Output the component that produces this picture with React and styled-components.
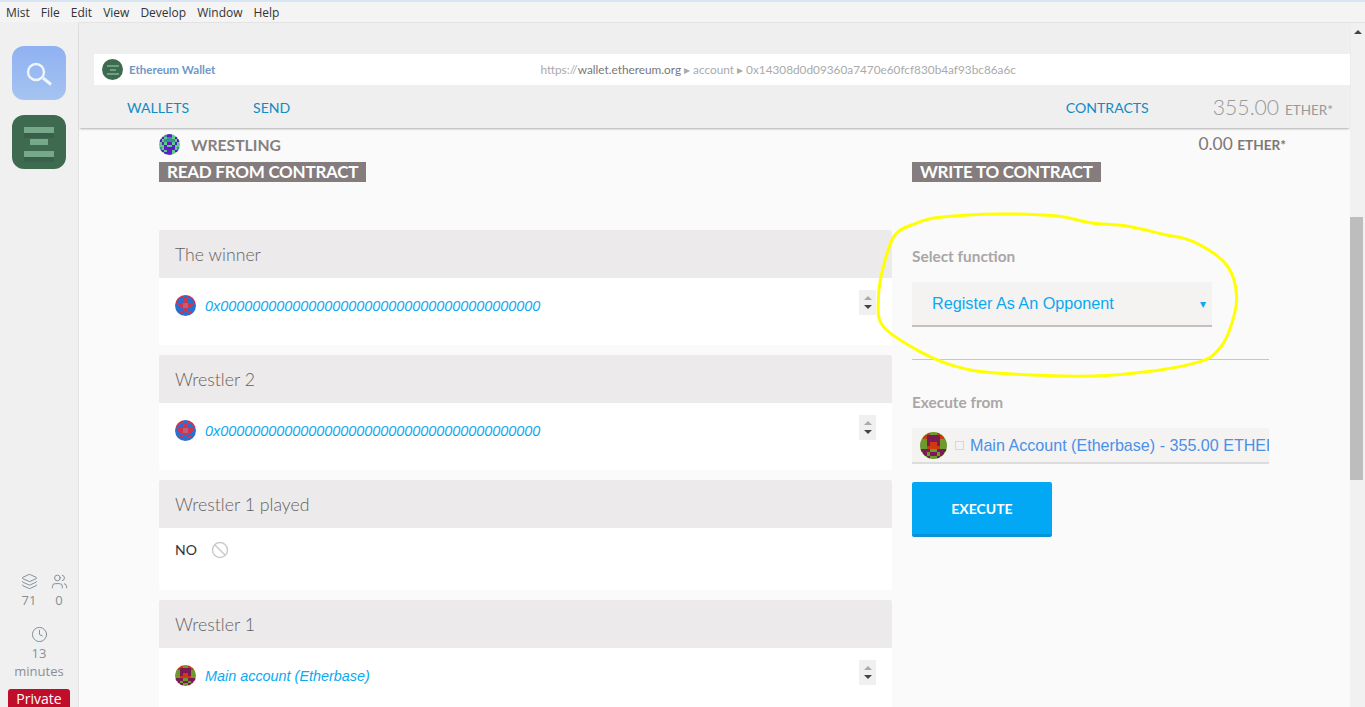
import React from 'react'
import styled, { createGlobalStyle } from 'styled-components'
import { Layers, Users, Clock, Ban } from 'lucide-react'

const MENU = ['Mist', 'File', 'Edit', 'View', 'Develop', 'Window', 'Help']
const ZEROS = '0x0000000000000000000000000000000000000000'

const WRESTLING = {
  colors: { g: '#63c98a', p: '#5a1fc0', t: '#3a8f9a' },
  rows: ['ggtppggg', 'gpgttgpg', 'pgttttgp', 'gpgppgpg', 'ggpggpgg', 'tgppppgt', 'ppgppgpp', 'ggpppggg'],
}
const BLUERED = {
  colors: { b: '#2a6fd0', r: '#d0344f', m: '#b8607e' },
  rows: ['brrbbrrb', 'rrbrrbrr', 'rbbrrbbr', 'brrmmrrb', 'bbrmmrbb', 'bbbrrbbb', 'bbrbbrbb', 'bbbbbbbb'],
}
const MAIN = {
  colors: { g: '#6c9a2c', m: '#7c1a55', r: '#cc3a12' },
  rows: ['ggrggrgg', 'grmmmmrg', 'ggmmmmgg', 'ggmrrmgg', 'ggrrrrgg', 'mmmggmmm', 'gmgmmgmg', 'ggmggmgg'],
}

const POINTS = [
  [228, 70], [300, 52], [480, 42], [650, 48], [750, 68], [860, 78], [970, 103], [1060, 125],
  [1160, 195], [1190, 295], [1165, 400], [1130, 455], [1080, 485], [945, 512], [760, 528],
  [480, 520], [350, 500], [240, 455], [130, 380], [115, 300], [130, 200], [165, 105],
]

// closed catmull-rom through the traced points of the pen stroke
const smoothLoop = (pts) => {
  const n = pts.length
  let d = `M${pts[0][0]} ${pts[0][1]}`
  pts.forEach((p, i) => {
    const prev = pts[(i - 1 + n) % n]
    const next = pts[(i + 1) % n]
    const after = pts[(i + 2) % n]
    const c1 = [p[0] + (next[0] - prev[0]) / 6, p[1] + (next[1] - prev[1]) / 6]
    const c2 = [next[0] - (after[0] - p[0]) / 6, next[1] - (after[1] - p[1]) / 6]
    d += ` C${c1[0]} ${c1[1]} ${c2[0]} ${c2[1]} ${next[0]} ${next[1]}`
  })
  return d + ' Z'
}

const Identicon = ({ data, size = 21 }) => (
  <IconDisc $size={size}>
    <svg width={size} height={size} viewBox="0 0 8 8" shapeRendering="crispEdges">
      {data.rows.map((row, y) =>
        row.split('').map((c, x) => <rect key={`${x}-${y}`} x={x} y={y} width="1" height="1" fill={data.colors[c]} />)
      )}
    </svg>
  </IconDisc>
)

const Stepper = () => (
  <StepBox>
    <StepUp />
    <StepDown />
  </StepBox>
)

const Section = ({ title, children }) => (
  <SectionBox>
    <SectionHead>{title}</SectionHead>
    {children}
  </SectionBox>
)

const AddressRow = ({ data, children }) => (
  <SectionBody $height={67}>
    <Identicon data={data} />
    <AddressText>{children}</AddressText>
    <Stepper />
  </SectionBody>
)

const App = () => {
  return (
    <Root>
      <GlobalStyle />
      <TopStrip />
      <MenuBar>
        {MENU.map((m) => <MenuItem key={m}>{m}</MenuItem>)}
      </MenuBar>
      <Shell>
        <Sidebar>
          <TabList>
            <TabIcon $bg="linear-gradient(#8fb1f1, #a5c4f1)">
              <svg width="54" height="54" viewBox="0 0 54 54" fill="none" stroke="#f0f4fc">
                <circle cx="24" cy="26" r="8" strokeWidth="2.4" />
                <path d="M31 32 L39 38.5" strokeWidth="3" />
              </svg>
            </TabIcon>
            <TabIcon $bg="#3e6b4f">
              <svg width="54" height="54" viewBox="0 0 54 54">
                <rect x="12" y="12" width="30" height="6" fill="#76a98a" />
                <rect x="12" y="18" width="30" height="5" fill="#38604a" />
                <rect x="18" y="24" width="18" height="6" fill="#76a98a" />
                <rect x="12" y="36" width="30" height="6" fill="#76a98a" />
                <rect x="12" y="42" width="30" height="5" fill="#38604a" />
              </svg>
            </TabIcon>
          </TabList>
          <StatusBlock>
            <StatPair>
              <Stat><Layers size={17} strokeWidth={1.2} color="#6f7f8a" />71</Stat>
              <Stat><Users size={17} strokeWidth={1.2} color="#6f7f8a" />0</Stat>
            </StatPair>
            <ClockStat>
              <Clock size={17} strokeWidth={1.2} color="#6f7f8a" />
              <span>13</span>
              <span>minutes</span>
            </ClockStat>
            <PrivateTag>Private</PrivateTag>
          </StatusBlock>
        </Sidebar>
        <Main>
          <Header>
            <UrlBar>
              <Brand>
                <BrandDisc>
                  <svg width="12" height="12" viewBox="0 0 12 12">
                    <rect x="0" y="1" width="12" height="2" fill="#6ea083" />
                    <rect x="3" y="5" width="6" height="2" fill="#6ea083" />
                    <rect x="0" y="9" width="12" height="2" fill="#6ea083" />
                  </svg>
                </BrandDisc>
                Ethereum Wallet
              </Brand>
              <UrlText>
                https://<b>wallet.ethereum.org</b> ▸ account ▸ 0x14308d0d09360a7470e60fcf830b4af93bc86a6c
              </UrlText>
            </UrlBar>
            <NavBar>
              <NavLink>WALLETS</NavLink>
              <NavLink>SEND</NavLink>
              <NavSpacer />
              <NavLink>CONTRACTS</NavLink>
              <Balance>355.00 <small>ETHER*</small></Balance>
            </NavBar>
          </Header>
          <Content>
            <TitleRow>
              <Identicon data={WRESTLING} />
              <Title>WRESTLING</Title>
              <TitleBalance>0.00 <b>ETHER*</b></TitleBalance>
            </TitleRow>
            <Columns>
              <ReadColumn>
                <Badge>READ FROM CONTRACT</Badge>
                <SectionList>
                  <Section title="The winner">
                    <AddressRow data={BLUERED}>{ZEROS}</AddressRow>
                  </Section>
                  <Section title="Wrestler 2">
                    <AddressRow data={BLUERED}>{ZEROS}</AddressRow>
                  </Section>
                  <Section title="Wrestler 1 played">
                    <SectionBody $height={62} $top={11}>
                      <NoRow>
                        <NoText>NO</NoText>
                        <Ban size={18} strokeWidth={2} color="#cbcbcb" />
                      </NoRow>
                    </SectionBody>
                  </Section>
                  <Section title="Wrestler 1">
                    <AddressRow data={MAIN}>Main account (Etherbase)</AddressRow>
                  </Section>
                </SectionList>
              </ReadColumn>
              <WriteColumn>
                <Badge>WRITE TO CONTRACT</Badge>
                <FieldLabel $top={64}>Select function</FieldLabel>
                <SelectBox>
                  Register As An Opponent
                  <SelectArrow>▾</SelectArrow>
                </SelectBox>
                <Rule />
                <FieldLabel $top={32}>Execute from</FieldLabel>
                <AccountBox>
                  <Identicon data={MAIN} size={27} />
                  <Tofu />
                  <AccountText>Main Account (Etherbase) - 355.00 ETHER</AccountText>
                </AccountBox>
                <ExecuteButton>EXECUTE</ExecuteButton>
              </WriteColumn>
            </Columns>
          </Content>
        </Main>
        <ScrollTrack>
          <ScrollUp />
          <ScrollThumb />
        </ScrollTrack>
      </Shell>
      <Scribble viewBox="0 0 1575 1050">
        <path d={smoothLoop(POINTS)} fill="none" stroke="#ffff00" strokeWidth="9" />
      </Scribble>
    </Root>
  )
}

export default App

const GlobalStyle = createGlobalStyle`
  html, body {
    margin: 0;
    height: 100%;
    overflow: hidden;
  }
  * {
    box-sizing: border-box;
  }
`
const Root = styled.div`
  position: relative;
  height: 707px;
  overflow: hidden;
  background: #f0f0f0;
  font-family: Lato, sans-serif;
`
const TopStrip = styled.div`
  height: 2px;
  background: #d8e6f3;
`
const MenuBar = styled.div`
  height: 20px;
  display: flex;
  align-items: center;
  gap: 11px;
  padding-left: 6px;
  background: #f4f4f4;
  font: 12px "Open Sans", sans-serif;
  color: #333;
`
const MenuItem = styled.span``
const Shell = styled.div`
  display: flex;
  height: 685px;
`
const Sidebar = styled.div`
  width: 79px;
  flex: none;
  display: flex;
  flex-direction: column;
  justify-content: space-between;
  padding-top: 24px;
  border-right: 1px solid #e3e3e3;
  background: #f0f0f0;
`
const TabList = styled.div`
  display: flex;
  flex-direction: column;
  gap: 15px;
  padding-left: 12px;
`
const TabIcon = styled.div`
  width: 54px;
  height: 54px;
  border-radius: 12px;
  background: ${({ $bg }) => $bg};
  svg {
    display: block;
  }
`
const StatusBlock = styled.div`
  display: flex;
  flex-direction: column;
  align-items: center;
  color: #8a8f94;
  font: 13px "Open Sans", sans-serif;
`
const StatPair = styled.div`
  display: flex;
  gap: 13px;
  margin-left: 10px;
`
const Stat = styled.div`
  display: flex;
  flex-direction: column;
  align-items: center;
  width: 17px;
  line-height: 20px;
`
const ClockStat = styled.div`
  display: flex;
  flex-direction: column;
  align-items: center;
  margin-top: 16px;
  line-height: 18px;
  svg {
    margin-bottom: 1px;
  }
`
const PrivateTag = styled.div`
  width: 62px;
  height: 18px;
  margin-top: 9px;
  border-radius: 3px 3px 0 0;
  background: #c00d2a;
  color: #fff;
  text-align: center;
  font: 14px/19px "Open Sans", sans-serif;
`
const Main = styled.div`
  flex: 1;
  min-width: 0;
  display: flex;
  flex-direction: column;
  background: #fafafa;
`
const Header = styled.div`
  flex: none;
  padding-top: 31px;
  background: #efefef;
  border-top: 1px solid #e3e3e3;
  box-shadow: 0 2px 2px -1px rgba(0, 0, 0, 0.3);
  position: relative;
  z-index: 1;
`
const UrlBar = styled.div`
  height: 31px;
  margin-left: 15px;
  display: flex;
  align-items: center;
  background: #fff;
`
const Brand = styled.div`
  display: flex;
  align-items: center;
  gap: 6px;
  padding-left: 8px;
  color: #6f98c8;
  font: 700 11.6px Lato, sans-serif;
`
const BrandDisc = styled.div`
  width: 21px;
  height: 21px;
  border-radius: 50%;
  background: #3e6b4f;
  display: flex;
  align-items: center;
  justify-content: center;
`
const UrlText = styled.div`
  flex: 1;
  text-align: center;
  color: #aaa;
  font: 11.8px Lato, sans-serif;
  padding-right: 9px;
  b {
    font-weight: 400;
    color: #777;
  }
`
const NavBar = styled.div`
  height: 43px;
  display: flex;
  align-items: center;
  gap: 64px;
  padding: 1px 17px 0 48px;
`
const NavLink = styled.span`
  color: #0f8bc6;
  font: 14.1px Lato, sans-serif;
`
const NavSpacer = styled.div`
  flex: 1;
`
const Balance = styled.div`
  color: #999;
  font: 300 21.2px Lato, sans-serif;
  small {
    font-size: 13.5px;
    font-weight: 400;
  }
`
const Content = styled.div`
  flex: 1;
  min-height: 0;
  padding: 6px 64px 0 80px;
  overflow: hidden;
`
const TitleRow = styled.div`
  display: flex;
  align-items: center;
  height: 21px;
  gap: 11px;
`
const IconDisc = styled.div`
  width: ${({ $size }) => $size}px;
  height: ${({ $size }) => $size}px;
  flex: none;
  border-radius: 50%;
  overflow: hidden;
  svg {
    display: block;
  }
`
const Title = styled.div`
  flex: 1;
  color: #857f7f;
  font: 700 15.7px Lato, sans-serif;
`
const TitleBalance = styled.div`
  color: #7d7777;
  font: 17.4px/18px Lato, sans-serif;
  b {
    font-size: 13.6px;
  }
`
const Columns = styled.div`
  display: flex;
  gap: 20px;
  margin-top: 7px;
`
const ReadColumn = styled.div`
  width: 733px;
  flex: none;
`
const WriteColumn = styled.div`
  width: 357px;
  flex: none;
`
const Badge = styled.div`
  display: inline-block;
  height: 20px;
  padding: 0 8px;
  background: #857d7d;
  color: #fff;
  font: 700 17px/20px Lato, sans-serif;
  letter-spacing: -0.25px;
`
const SectionList = styled.div`
  display: flex;
  flex-direction: column;
  gap: 10px;
  margin-top: 48px;
`
const SectionBox = styled.section``
const SectionHead = styled.div`
  height: 48px;
  padding-left: 16px;
  background: #eceaea;
  border-radius: 2px 2px 0 0;
  color: #666161;
  font: 300 17.7px/50px Lato, sans-serif;
`
const SectionBody = styled.div`
  height: ${({ $height }) => $height}px;
  display: flex;
  align-items: flex-start;
  gap: 9px;
  padding: ${({ $top }) => $top || 17}px 16px 0;
  background: #fff;
`
const AddressText = styled.span`
  flex: 1;
  color: #0aa9f0;
  font: italic 14.4px/23px "Liberation Sans", sans-serif;
`
const StepBox = styled.div`
  width: 17px;
  height: 25px;
  margin-top: -5px;
  display: flex;
  flex-direction: column;
  align-items: center;
  justify-content: center;
  gap: 5px;
  background: #f0f0f0;
`
const StepUp = styled.div`
  border: 4px solid transparent;
  border-top: 0;
  border-bottom: 4px solid #aaa;
`
const StepDown = styled.div`
  border: 4px solid transparent;
  border-bottom: 0;
  border-top: 4px solid #444;
`
const NoRow = styled.div`
  display: flex;
  align-items: center;
  gap: 14px;
  height: 22px;
`
const NoText = styled.span`
  color: #333;
  font: 14px/22px Lato, sans-serif;
`
const FieldLabel = styled.div`
  margin-top: ${({ $top }) => $top}px;
  color: #aaa6a6;
  font: 700 15.4px/20px Lato, sans-serif;
`
const SelectBox = styled.div`
  width: 300px;
  height: 45px;
  margin-top: 16px;
  display: flex;
  align-items: center;
  justify-content: space-between;
  padding: 0 6px 0 20px;
  background: #f4f3f2;
  border-bottom: 2px solid #c4c0c0;
  color: #0aa9f0;
  font: 16.2px "Liberation Sans", sans-serif;
`
const SelectArrow = styled.span`
  font-size: 12px;
`
const Rule = styled.div`
  height: 1px;
  margin-top: 32px;
  background: #c8c6c6;
`
const AccountBox = styled.div`
  height: 36px;
  margin-top: 16px;
  display: flex;
  align-items: center;
  gap: 8px;
  padding-left: 8px;
  background: #f4f3f2;
  border-bottom: 2px solid #dcdcdc;
  overflow: hidden;
  white-space: nowrap;
`
const Tofu = styled.span`
  width: 9px;
  height: 9px;
  flex: none;
  border: 1px solid #c9d9ee;
`
const AccountText = styled.span`
  margin-left: -2px;
  color: #4a90e8;
  font: 16.1px "Liberation Sans", sans-serif;
`
const ExecuteButton = styled.div`
  width: 140px;
  height: 55px;
  margin-top: 18px;
  display: flex;
  align-items: center;
  justify-content: center;
  border-radius: 2px;
  border-bottom: 3px solid #0a94d8;
  background: #02a8f4;
  color: #fff;
  font: 700 14px Lato, sans-serif;
`
const ScrollTrack = styled.div`
  width: 15px;
  flex: none;
  background: #f1f1f1;
  border-top: 1px solid #e3e3e3;
  display: flex;
  flex-direction: column;
  align-items: center;
`
const ScrollUp = styled.div`
  margin-top: 7px;
  border: 4px solid transparent;
  border-top: 0;
  border-bottom: 4px solid #444;
`
const ScrollThumb = styled.div`
  width: 13px;
  height: 263px;
  margin-top: 183px;
  margin-right: 2px;
  background: #bdbdbd;
`
const Scribble = styled.svg`
  position: absolute;
  left: 840px;
  top: 200px;
  width: 525px;
  height: 350px;
  pointer-events: none;
`
